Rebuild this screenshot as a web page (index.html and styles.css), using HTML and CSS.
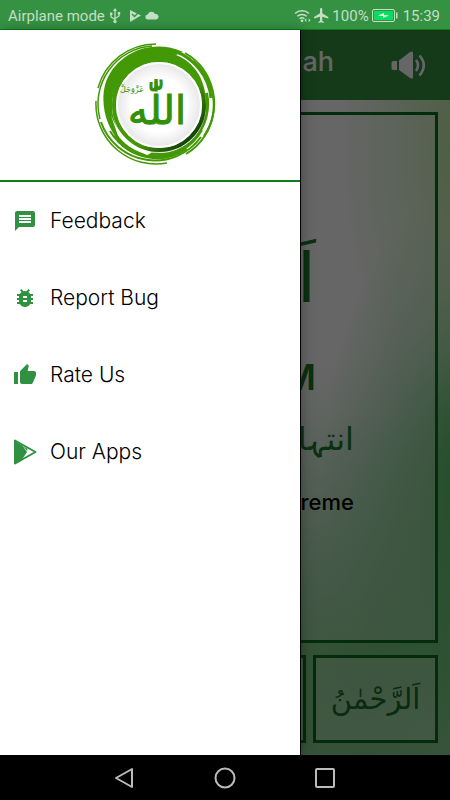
FILE: index.html
```html
<!DOCTYPE html>
<html lang="en">
<head>
  <meta charset="UTF-8" />
  <meta name="viewport" content="width=device-width, initial-scale=1.0"/>
  <title>Names of Allah</title>
  <link rel="stylesheet" href="styles.css">
</head>
<body>
  <div class="status-bar">
    <span>Airplane mode</span>
    <svg class="status-icon usb" viewBox="0 0 12 16" width="12" height="16" aria-hidden="true">
      <path d="M6 2v11M2 6v3l4 2.500M10 5v3l-4 2.500" fill="none" stroke="currentColor" stroke-width="1.300"/>
      <path d="M6 0l2 3H4zM1 4.500h2.400v2.400H1zM8.800 4h2.400v2.400H8.800z"/>
      <circle cx="6" cy="13.500" r="1.700"/>
    </svg>
    <svg class="status-icon" viewBox="0 0 12 12" width="12" height="12" aria-hidden="true">
      <path d="M1 0l11 5.500L1 12z"/>
      <path d="M3 4l2.500 2.500L11 1" fill="none" stroke="#369243" stroke-width="1.400"/>
    </svg>
    <svg class="status-icon cloud" viewBox="0 0 14 9" width="14" height="9" aria-hidden="true">
      <path d="M3 8.500a2.500 2.500 0 0 1-.3-5A4 4 0 0 1 10 3a2.800 2.800 0 0 1 1.300 5.500z"/>
    </svg>
    <span class="status-right">
      <svg class="status-icon" viewBox="0 0 17 15" width="17" height="15" aria-hidden="true">
        <path d="M1 5.500a10.500 10.500 0 0 1 14 0M3.300 8.200a7 7 0 0 1 9.400 0M5.600 10.700a3.700 3.700 0 0 1 4.800 0" fill="none" stroke="currentColor" stroke-width="1.500"/>
        <circle cx="8" cy="12.800" r="1.400"/>
        <path d="M10.500 12.300l1.800-2v4zM16.500 12.300l-1.800-2v4z"/>
      </svg>
      <svg class="status-icon" viewBox="2 2 20 20" width="15" height="15" aria-hidden="true">
        <path d="M21 16v-2l-8-5V3.500a1.500 1.500 0 0 0-3 0V9l-8 5v2l8-2.500V19l-2 1.500V22l3.500-1 3.500 1v-1.500L13 19v-5.500z"/>
      </svg>
      <span>100%</span>
      <svg class="battery" viewBox="0 0 26 13" width="26" height="13" aria-hidden="true">
        <rect x=".5" y=".5" width="22" height="12" rx="1.500" fill="none" stroke="#c3dfc6"/>
        <rect x="2" y="2" width="19" height="9" fill="#0bdc62"/>
        <path d="M24 3.500h1.500v6H24z" fill="#c3dfc6"/>
        <path d="M6 6.500l6-2.500v2l5 .5-6 2.500V7z" fill="#e3ffe9"/>
      </svg>
      <span>15:39</span>
    </span>
  </div>

  <div class="screen">
    <div class="app">
      <header class="app-header">
        <h1>Allah</h1>
        <button class="sound" type="button" aria-label="Sound">
          <svg viewBox="0 0 36 28" width="36" height="28" aria-hidden="true">
            <path d="M2 10h4v9H2a2 2 0 0 1-1.500-2v-5A2 2 0 0 1 2 10zM8 9.500L19 1q3-1.500 3 1v24q0 3-3 1L8 19z" fill="currentColor"/>
            <path d="M25 9q4 5 0 11M28.500 4.500q8.500 9.500 0 20" fill="none" stroke="currentColor" stroke-width="2.600"/>
          </svg>
        </button>
      </header>
      <main class="names">
        <section class="name-card">
          <p class="name-arabic" lang="ar" dir="rtl">اَ</p>
          <p class="name-latin">M</p>
          <p class="name-urdu" lang="ur" dir="rtl">انتہا</p>
          <p class="name-meaning">Supreme</p>
        </section>
        <div class="thumbs">
          <button class="thumb" type="button" aria-label="Previous"></button>
          <button class="thumb" type="button" aria-label="Current"></button>
          <button class="thumb" type="button" lang="ar">اَلرَّحْمٰنُ</button>
        </div>
      </main>
    </div>
    <div class="scrim"></div>

    <aside class="drawer">
      <div class="drawer-header">
        <svg class="logo" viewBox="0 0 122 122" width="122" height="122" role="img" aria-label="Allah">
          <defs>
            <radialGradient id="disc">
              <stop offset=".6" stop-color="#fff"/>
              <stop offset="1" stop-color="#e2e2e2"/>
            </radialGradient>
            <linearGradient id="ring" x1="0" y1="0" x2="1" y2="1">
              <stop offset=".6" stop-color="#439806"/>
              <stop offset=".85" stop-color="#17450a"/>
            </linearGradient>
          </defs>
          <g fill="none" stroke="#439806">
            <path d="M61 1A60 60 0 0 0 3 45" stroke-width="1.500"/>
            <path d="M57 3A58 58 0 0 0 5 76" stroke-width="1.500"/>
            <path d="M90 10A58 58 0 0 1 109 93" stroke-width="2"/>
            <path d="M98 18A57 57 0 0 1 91 111" stroke-width="2"/>
            <path d="M1 58A60 60 0 0 0 72 120" stroke-width="1.500"/>
            <path d="M6 79A57 57 0 0 0 106 94" stroke-width="2"/>
            <path d="M15 88A53 53 0 0 0 107 87" stroke-width="2"/>
            <path d="M79 8A55 55 0 0 1 116 55" stroke-width="3"/>
            <path d="M20 92A51 51 0 0 0 91 105" stroke-width="4"/>
            <path d="M111 50A51 51 0 0 1 99 95" stroke-width="4"/>
          </g>
          <path d="M88 9C55-6 19 12 10 42 5 63 12 85 25 99L18 78C28 101 45 113 65 113 91 113 110 91 111 64 112 39 101 20 81 12z" fill="#439806"/>
          <path d="M16 72Q26 100 58 109L52 112Q24 102 16 72z" fill="#fff"/>
          <circle cx="64" cy="63" r="47" fill="#fff"/>
          <path d="M56 110Q94 110 111 70L110 48Q108 98 56 106z" fill="#c4c4c4"/>
          <circle cx="64" cy="62" r="45" fill="url(#disc)" stroke="url(#ring)" stroke-width="4"/>
          <circle cx="64" cy="62" r="42" fill="none" stroke="#fff" stroke-width="2"/>
          <text class="logo-name" x="62" y="81" text-anchor="middle" lang="ar">اللّٰه</text>
          <text class="logo-honor" x="37" y="49" text-anchor="middle" lang="ar">عَزَّوَجَلَّ</text>
        </svg>
      </div>
      <nav class="menu">
        <a href="#feedback">
          <svg viewBox="0 0 24 24" width="24" height="24" aria-hidden="true">
            <path d="M20 2H4a2 2 0 0 0-2 2v18l4-4h14a2 2 0 0 0 2-2V4a2 2 0 0 0-2-2zM18 14H6v-2h12zm0-3H6V9h12zm0-3H6V6h12z"/>
          </svg>
          Feedback
        </a>
        <a href="#report">
          <svg viewBox="0 0 24 24" width="24" height="24" aria-hidden="true">
            <path d="M20 8h-2.810a6 6 0 0 0-1.820-1.960L17 4.410 15.590 3l-2.170 2.170a6 6 0 0 0-2.840 0L8.410 3 7 4.410l1.620 1.630A6 6 0 0 0 6.810 8H4v2h2.090A6 6 0 0 0 6 11v1H4v2h2v1q0 .5.090 1H4v2h2.810a6 6 0 0 0 10.380 0H20v-2h-2.090q.09-.5.090-1v-1h2v-2h-2v-1q0-.5-.09-1H20zm-6 8h-4v-2h4zm0-4h-4v-2h4z"/>
          </svg>
          Report Bug
        </a>
        <a href="#rate">
          <svg viewBox="0 0 24 24" width="24" height="24" aria-hidden="true">
            <path d="M1 21h4V9H1zM23 10a2 2 0 0 0-2-2h-6.310l.95-4.570.03-.32c0-.41-.17-.79-.44-1.060L14.170 1 7.590 7.590C7.220 7.950 7 8.450 7 9v10a2 2 0 0 0 2 2h9c.83 0 1.540-.5 1.840-1.220l3.020-7.050c.09-.23.14-.47.14-.73z"/>
          </svg>
          Rate Us
        </a>
        <a href="#apps">
          <svg viewBox="0 0 24 26" width="24" height="26" aria-hidden="true">
            <path d="M2 1.500L22.500 13 2 24.500z" fill="none" stroke="currentColor" stroke-width="2" stroke-linejoin="round"/>
            <path d="M2 2l8 5 1.500 2.500 2.500 3.500L8 22l-6 3z"/>
            <path d="M10.500 7.500l4 2.200-.4 2.300z"/>
          </svg>
          Our Apps
        </a>
      </nav>
    </aside>
  </div>

  <div class="nav-bar">
    <button type="button" aria-label="Back">
      <svg viewBox="0 0 24 24" width="24" height="24"><path d="M19 3v18L3 12z"/></svg>
    </button>
    <button type="button" aria-label="Home">
      <svg viewBox="0 0 24 24" width="24" height="24"><circle cx="12" cy="12" r="9.500"/></svg>
    </button>
    <button type="button" aria-label="Recent">
      <svg viewBox="0 0 24 24" width="24" height="24"><rect x="3" y="3" width="18" height="18" rx="1"/></svg>
    </button>
  </div>
</body>
</html>
```
FILE: styles.css
```css
* {
  box-sizing: border-box;
}
body {
  margin: 0;
  min-height: 100vh;
  display: flex;
  flex-direction: column;
  font-family: Inter, "Liberation Sans", sans-serif;
}
h1, p {
  margin: 0;
}
button {
  border: 0;
  padding: 0;
  background: none;
}
svg {
  display: block;
  flex: none;
}

.status-bar {
  height: 30px;
  padding: 2px 10px 0 8px;
  display: flex;
  align-items: center;
  gap: 4px;
  background: #369243;
  border-bottom: 1px solid #0b7d14;
  color: #c3dfc6;
  font: 15px Roboto, sans-serif;
}
.status-icon {
  fill: currentColor;
}
.usb {
  margin-right: 4px;
}
.status-right {
  margin-left: auto;
  display: flex;
  align-items: center;
  gap: 3px;
}
.battery {
  margin-right: 2px;
}

.screen {
  flex: 1;
  position: relative;
  display: flex;
}
.app {
  flex: 1;
  display: flex;
  flex-direction: column;
  background:
    radial-gradient(ellipse 110px 260px at 100% 120px, #c0eeaa, rgba(192, 238, 170, 0)),
    radial-gradient(ellipse 150px 280px at 105% 440px, #50be60, rgba(80, 190, 96, 0)),
    radial-gradient(ellipse 260px 260px at 80% 640px, #78c880, rgba(120, 200, 128, 0)),
    linear-gradient(#fff 0 45%, #a0dca8 85%);
}
.app-header {
  height: 70px;
  display: flex;
  align-items: center;
  justify-content: flex-end;
  gap: 57px;
  padding-right: 23px;
  background: #33913f;
  color: #fff;
}
.app-header h1 {
  font-size: 27px;
  font-weight: 500;
  padding-bottom: 8px;
}
.sound {
  color: #fff;
}
.names {
  flex: 1;
  display: flex;
  flex-direction: column;
  gap: 12px;
  padding: 12px;
}
.name-card {
  flex: 1;
  display: flex;
  flex-direction: column;
  align-items: flex-end;
  padding: 110px 81px 0 0;
  border: 3px solid #0a6b1c;
  background: rgba(255, 255, 255, 0.25);
  color: #1a7a2c;
}
.name-arabic {
  margin-right: 38px;
  font: 68px/108px "DejaVu Sans", sans-serif;
}
.name-latin {
  margin-right: 38px;
  font-size: 36px;
  font-weight: 600;
  line-height: 88px;
}
.name-urdu {
  font: 32px/36px "DejaVu Sans", sans-serif;
}
.name-meaning {
  padding-top: 32px;
  color: #000;
  font-size: 22px;
  font-weight: 500;
}
.thumbs {
  display: flex;
  justify-content: flex-end;
  gap: 7px;
}
.thumb {
  flex: none;
  width: 125px;
  height: 88px;
  border: 3px solid #0a6b1c;
  background: rgba(255, 255, 255, 0.25);
  color: #1a6a2c;
  font: 29px "DejaVu Sans", sans-serif;
}
.scrim {
  position: absolute;
  inset: 0;
  background: rgba(0, 0, 0, 0.6);
}

.drawer {
  position: absolute;
  inset: 0 auto 0 0;
  width: 66.67%;
  background: #fff;
  box-shadow: 1px 0 #000, 2px 0 12px rgba(0, 0, 0, 0.3);
}
.drawer-header {
  display: flex;
  justify-content: center;
  padding: 13px 0 15px 11px;
  border-bottom: 2px solid #0c7f1c;
}
.logo {
  fill: #319106;
}
.logo-name {
  font: 40px "DejaVu Sans", sans-serif;
  stroke: #319106;
  stroke-width: 1px;
}
.logo-honor {
  font: 8px "DejaVu Sans", sans-serif;
}
.menu {
  display: flex;
  flex-direction: column;
}
.menu a {
  height: 77px;
  display: flex;
  align-items: center;
  gap: 13px;
  padding-left: 13px;
  color: #000;
  font-size: 21px;
  font-weight: 300;
  text-decoration: none;
}
.menu svg {
  color: #309140;
  fill: currentColor;
}

.nav-bar {
  height: 45px;
  display: flex;
  align-items: center;
  justify-content: center;
  gap: 76px;
  background: #000;
}
.nav-bar svg {
  fill: none;
  stroke: #bbb;
  stroke-width: 2;
  stroke-linejoin: round;
}
```
